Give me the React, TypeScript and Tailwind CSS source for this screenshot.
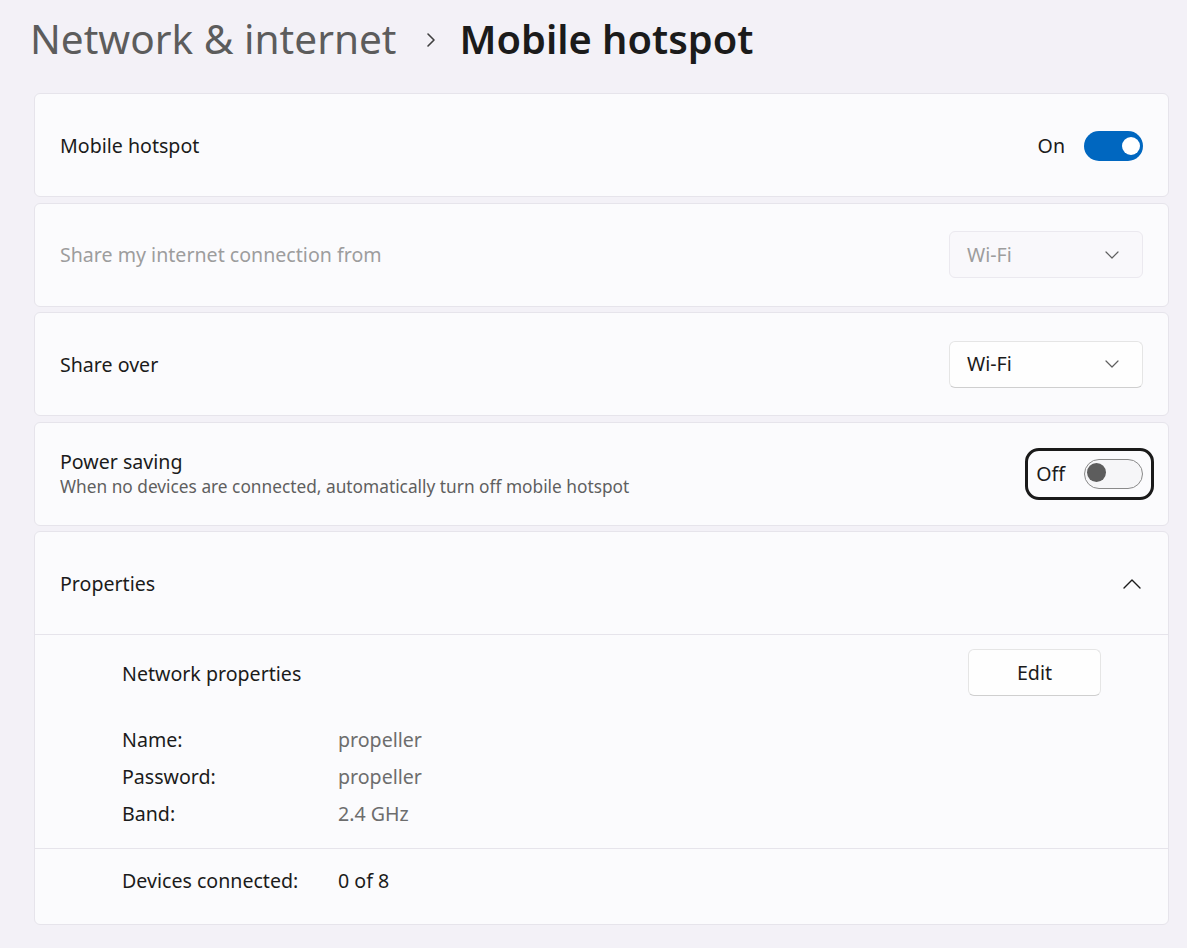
import type { ReactNode } from 'react';

function ChevronDown() {
  return (
    <svg width="14" height="8" viewBox="0 0 14 8" fill="none">
      <path d="M1 1l6 6 6-6" stroke="#5f5f5f" strokeWidth="1.2" strokeLinecap="round" strokeLinejoin="round" />
    </svg>
  );
}

function Card({ children, className = '' }: { children: ReactNode; className?: string }) {
  return (
    <div className={`rounded-[6px] border border-[#e6e4eb] bg-[#fbfbfd] ${className}`}>{children}</div>
  );
}

function Dropdown({ value, disabled = false }: { value: string; disabled?: boolean }) {
  return (
    <div
      className={`flex h-[47px] w-[194px] items-center justify-between rounded-[6px] border pl-[17px] pr-[23px] ${
        disabled
          ? 'border-[#ebe9ef] bg-[#f9f8fb] text-[#9d9d9d]'
          : 'border-[#e5e5e5] border-b-[#cfcfcf] bg-[#fefefe] text-[#1b1b1b]'
      }`}
    >
      <span>{value}</span>
      <ChevronDown />
    </div>
  );
}

export default function App() {
  return (
    <div className="min-h-screen bg-[#f3f1f7] pb-[22px] pr-[18px] font-['Noto_Sans',sans-serif] text-[19.6px] text-[#1b1b1b]">
      {/* Breadcrumb */}
      <div className="flex h-[93px] items-start pl-[30px] pt-[12px]">
        <h1 className="flex items-center leading-[54px]">
          <span className="text-[40.6px] text-[#5c5c5c]">Network &amp; internet</span>
          <svg className="ml-[28px] mr-[23px] mt-[2px]" width="12" height="16" viewBox="0 0 12 16" fill="none">
            <path d="M3 2l6 6-6 6" stroke="#3f3f3f" strokeWidth="1.6" strokeLinecap="round" strokeLinejoin="round" />
          </svg>
          <span className="text-[39.8px] font-semibold text-[#1b1b1b]">Mobile hotspot</span>
        </h1>
      </div>

      <div className="ml-[34px] flex flex-col gap-[5.5px]">
        <Card className="flex h-[104px] items-center justify-between px-[25px] pt-[2px]">
          <span>Mobile hotspot</span>
          <div className="flex items-center gap-[19px]">
            <span>On</span>
            <div className="relative h-[30px] w-[59px] rounded-full bg-[#0067c0]">
              <div className="absolute right-[3px] top-[6px] h-[18px] w-[18px] rounded-full bg-white" />
            </div>
          </div>
        </Card>

        <Card className="flex h-[104px] items-center justify-between px-[25px]">
          <span className="pt-[1px] text-[#9d9d9d]">Share my internet connection from</span>
          <Dropdown value="Wi-Fi" disabled />
        </Card>

        <Card className="flex h-[104px] items-center justify-between px-[25px]">
          <span className="pt-[1px]">Share over</span>
          <Dropdown value="Wi-Fi" />
        </Card>

        <Card className="flex h-[104px] items-center justify-between px-[25px]">
          <div className="flex flex-col">
            <span className="leading-[26px]">Power saving</span>
            <span className="text-[17.3px] leading-[24px] text-[#5f5f5f]">
              When no devices are connected, automatically turn off mobile hotspot
            </span>
          </div>
          <div className="flex items-center gap-[19px] rounded-[3px] outline-[3px] outline-offset-[8px] outline-[#1a1a1a] outline-solid">
            <span>Off</span>
            <div className="relative h-[30px] w-[59px] rounded-full border-[1.5px] border-[#8a8a8a] bg-[#f6f6f8]">
              <div className="absolute left-[2px] top-[3.5px] h-[19px] w-[19px] rounded-full bg-[#5d5d5d]" />
            </div>
          </div>
        </Card>

        <Card className="flex flex-col">
          <div className="flex h-[102px] items-center justify-between pl-[25px] pr-[27px]">
            <span className="pt-[2px]">Properties</span>
            <svg width="18" height="11" viewBox="0 0 18 11" fill="none">
              <path d="M1 10l8-8 8 8" stroke="#1b1b1b" strokeWidth="1.4" strokeLinecap="round" strokeLinejoin="round" />
            </svg>
          </div>
          <div className="border-t border-[#e6e4eb] pb-[16px] pl-[87px] pr-[67px] pt-[14px]">
            <div className="flex items-center justify-between">
              <span className="pt-[3px]">Network properties</span>
              <button className="flex h-[47px] w-[133px] items-center justify-center rounded-[6px] border border-[#e5e5e5] border-b-[#cfcfcf] bg-[#fefefe] text-[#1b1b1b]">
                Edit
              </button>
            </div>
            <div className="mt-[25px] flex flex-col">
              {[
                ['Name:', 'propeller'],
                ['Password:', 'propeller'],
                ['Band:', '2.4 GHz'],
              ].map(([label, value]) => (
                <div key={label} className="flex h-[37px] items-center">
                  <span className="w-[216px]">{label}</span>
                  <span className="text-[#6d6d6d]">{value}</span>
                </div>
              ))}
            </div>
          </div>
          <div className="flex h-[76px] items-start border-t border-[#e6e4eb] pl-[87px] pt-[13px]">
            <div className="flex h-[37px] items-center">
              <span className="w-[216px]">Devices connected:</span>
              <span>0 of 8</span>
            </div>
          </div>
        </Card>
      </div>
    </div>
  );
}
